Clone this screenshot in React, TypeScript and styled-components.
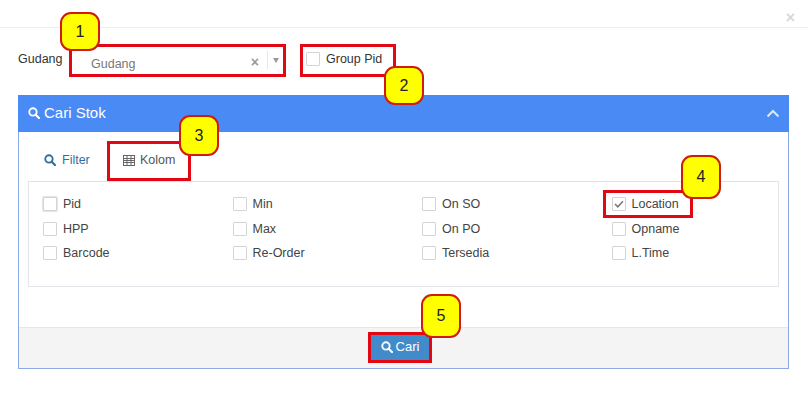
import React from 'react'
import styled, { createGlobalStyle } from 'styled-components'

const columns = [
  ['Pid', 'HPP', 'Barcode'],
  ['Min', 'Max', 'Re-Order'],
  ['On SO', 'On PO', 'Tersedia'],
  ['Location', 'Opname', 'L.Time'],
]

const callouts = [
  { label: '1', left: 60, top: 12, h: 39 },
  { label: '2', left: 384, top: 66, h: 39 },
  { label: '3', left: 179, top: 115, h: 41 },
  { label: '4', left: 681, top: 155, h: 44 },
  { label: '5', left: 421, top: 294, h: 44 },
]

const SearchIcon = ({ size, color }: { size: number; color: string }) => (
  <svg width={size} height={size} viewBox="0 0 14 14" fill="none">
    <circle cx="5.8" cy="5.8" r="4.3" stroke={color} strokeWidth="2.2" />
    <path d="M9 9l3.8 3.8" stroke={color} strokeWidth="2.6" strokeLinecap="round" />
  </svg>
)

const TableIcon = () => (
  <svg width="12" height="11" viewBox="0 0 12 11" fill="none" stroke="#666" strokeWidth="1">
    <rect x="0.5" y="0.5" width="11" height="10" />
    <path d="M0.5 3.5h11M0.5 5.5h11M0.5 7.5h11M4 0.5v10M8 0.5v10" />
  </svg>
)

export default function App() {
  return (
    <>
      <GlobalStyle />
      <Page>
        <TopBar>
          <CloseMark>×</CloseMark>
        </TopBar>

        <FormRow>
          <FieldLabel>Gudang</FieldLabel>
          <SelectBox>
            <SelectValue>Gudang</SelectValue>
            <ClearMark>×</ClearMark>
            <SelectArrow />
          </SelectBox>
          <GroupBox>
            <CheckBox />
            <span>Group Pid</span>
          </GroupBox>
        </FormRow>

        <Panel>
          <PanelHeader>
            <PanelTitle>
              <SearchIcon size={12} color="#fff" />
              Cari Stok
            </PanelTitle>
            <svg width="14" height="9" viewBox="0 0 14 9" fill="none">
              <path d="M1.5 7.5L7 2l5.5 5.500" stroke="#dce8fb" strokeWidth="2" />
            </svg>
          </PanelHeader>

          <PanelBody>
            <Tabs>
              <FilterTab>
                <SearchIcon size={12} color="#2f6f9f" />
                Filter
              </FilterTab>
              <KolomTab>
                <TableIcon />
                Kolom
              </KolomTab>
            </Tabs>

            <ColumnBox>
              {columns.map((col) => (
                <Column key={col[0]}>
                  {col.map((name) =>
                    name === 'Location' ? (
                      <LocationOption key={name}>
                        <CheckBox>
                          <svg width="10" height="8" viewBox="0 0 10 8" fill="none">
                            <path d="M1 4l2.800 2.800L9 1.200" stroke="#777" strokeWidth="1.500" />
                          </svg>
                        </CheckBox>
                        {name}
                      </LocationOption>
                    ) : (
                      <Option key={name}>
                        <CheckBox $focused={name === 'Pid'} />
                        {name}
                      </Option>
                    )
                  )}
                </Column>
              ))}
            </ColumnBox>
          </PanelBody>

          <PanelFooter>
            <SearchButton>
              <SearchIcon size={12} color="#fff" />
              Cari
            </SearchButton>
          </PanelFooter>
        </Panel>

        {callouts.map((c) => (
          <Callout key={c.label} style={{ left: c.left, top: c.top, height: c.h }}>
            {c.label}
          </Callout>
        ))}
      </Page>
    </>
  )
}

const GlobalStyle = createGlobalStyle`
  html, body {
    margin: 0;
    padding: 0;
    background: #fff;
  }
  * {
    box-sizing: border-box;
  }
`

const Page = styled.div`
  position: relative;
  width: 808px;
  height: 410px;
  overflow: hidden;
  font-family: 'Liberation Sans', Arial, sans-serif;
  font-size: 12.5px;
  color: #333;
`

const TopBar = styled.div`
  height: 28px;
  border-bottom: 1px solid #eeeeee;
  display: flex;
  justify-content: flex-end;
  padding-right: 13px;
`

const CloseMark = styled.span`
  font-size: 16px;
  line-height: 36px;
  color: #d8d8d8;
  font-weight: 700;
`

const FormRow = styled.div`
  display: flex;
  align-items: flex-start;
  height: 67px;
  padding: 16px 0 0 18px;
`

const FieldLabel = styled.div`
  width: 51px;
  line-height: 31px;
`

const SelectBox = styled.div`
  width: 217px;
  height: 33px;
  border: 3px solid #e30613;
  display: flex;
  align-items: center;
  padding: 6px 0 0 19px;
  color: #777;
`

const SelectValue = styled.span`
  flex: 1;
`

const ClearMark = styled.span`
  font-size: 14px;
  font-weight: 700;
  color: #999;
  margin: -4px 8px 0 0;
`

const SelectArrow = styled.span`
  width: 16px;
  height: 18px;
  margin: -7px 0 0 0;
  border-left: 1px solid #e6e6e6;
  position: relative;
  &::after {
    content: '';
    position: absolute;
    left: 5px;
    top: 7px;
    border-left: 3px solid transparent;
    border-right: 3px solid transparent;
    border-top: 5px solid #999;
  }
`

const GroupBox = styled.div`
  width: 96px;
  height: 33px;
  margin-left: 14px;
  border: 3px solid #e30613;
  display: flex;
  align-items: center;
  gap: 6px;
  padding: 0 0 3px 3px;
  white-space: nowrap;
`

const CheckBox = styled.span<{ $focused?: boolean }>`
  width: 14px;
  height: 14px;
  flex: none;
  border: 1px solid #d4d4d4;
  border-radius: 1px;
  background: #fff;
  box-shadow: ${(p) => (p.$focused ? '0 0 1px 1px #e4e4e4' : 'none')};
  display: flex;
  align-items: center;
  justify-content: center;
`

const Panel = styled.div`
  width: 771px;
  height: 274px;
  margin-left: 18px;
  border: 1px solid #8aa9e6;
  border-top: none;
  display: flex;
  flex-direction: column;
`

const PanelHeader = styled.div`
  height: 37px;
  margin: 0 -1px;
  background: #4a8af4;
  display: flex;
  align-items: center;
  justify-content: space-between;
  padding: 0 9px 0 10px;
`

const PanelTitle = styled.div`
  display: flex;
  align-items: center;
  gap: 4px;
  color: #fff;
  font-size: 15px;
  margin-top: -2px;
`

const PanelBody = styled.div`
  flex: 1;
  padding: 0 9px;
`

const Tabs = styled.div`
  display: flex;
  align-items: flex-end;
  height: 49px;
`

const FilterTab = styled.div`
  width: 79px;
  height: 40px;
  padding: 0 0 2px 16px;
  display: flex;
  align-items: center;
  gap: 6px;
  color: #2f6f9f;
`

const KolomTab = styled.div`
  width: 84px;
  height: 40px;
  border: 3px solid #e30613;
  display: flex;
  align-items: center;
  gap: 5px;
  padding: 0 0 2px 13px;
  color: #555;
`

const ColumnBox = styled.div`
  height: 106px;
  border: 1px solid #e2e5ea;
  border-top-color: #dfe2e8;
  display: grid;
  grid-template-columns: repeat(4, 189.500px);
  padding: 15px 0 0 14px;
`

const Column = styled.div`
  display: flex;
  flex-direction: column;
  gap: 10px;
`

const Option = styled.div`
  height: 14.500px;
  display: flex;
  align-items: center;
  gap: 6px;
  color: #444;
`

const LocationOption = styled(Option)`
  width: 90px;
  height: 28px;
  margin: -7px 0 -6.500px -9px;
  padding-left: 6px;
  border: 3px solid #e30613;
`

const PanelFooter = styled.div`
  height: 41px;
  background: #f4f4f5;
  border-top: 1px solid #e6e6e6;
  display: flex;
  justify-content: center;
  align-items: flex-start;
  padding: 4px 7px 0 0;
`

const SearchButton = styled.div`
  width: 64px;
  height: 31px;
  background: #428bca;
  border: 3px solid #e30613;
  display: flex;
  align-items: center;
  justify-content: center;
  gap: 3px;
  color: #fff;
  font-size: 13px;
  padding-bottom: 2px;
`

const Callout = styled.div`
  position: absolute;
  width: 40px;
  background: #ffff00;
  border: 2px solid #d01c0c;
  border-radius: 11px;
  display: flex;
  align-items: center;
  justify-content: center;
  font-size: 16px;
  color: #222;
`
